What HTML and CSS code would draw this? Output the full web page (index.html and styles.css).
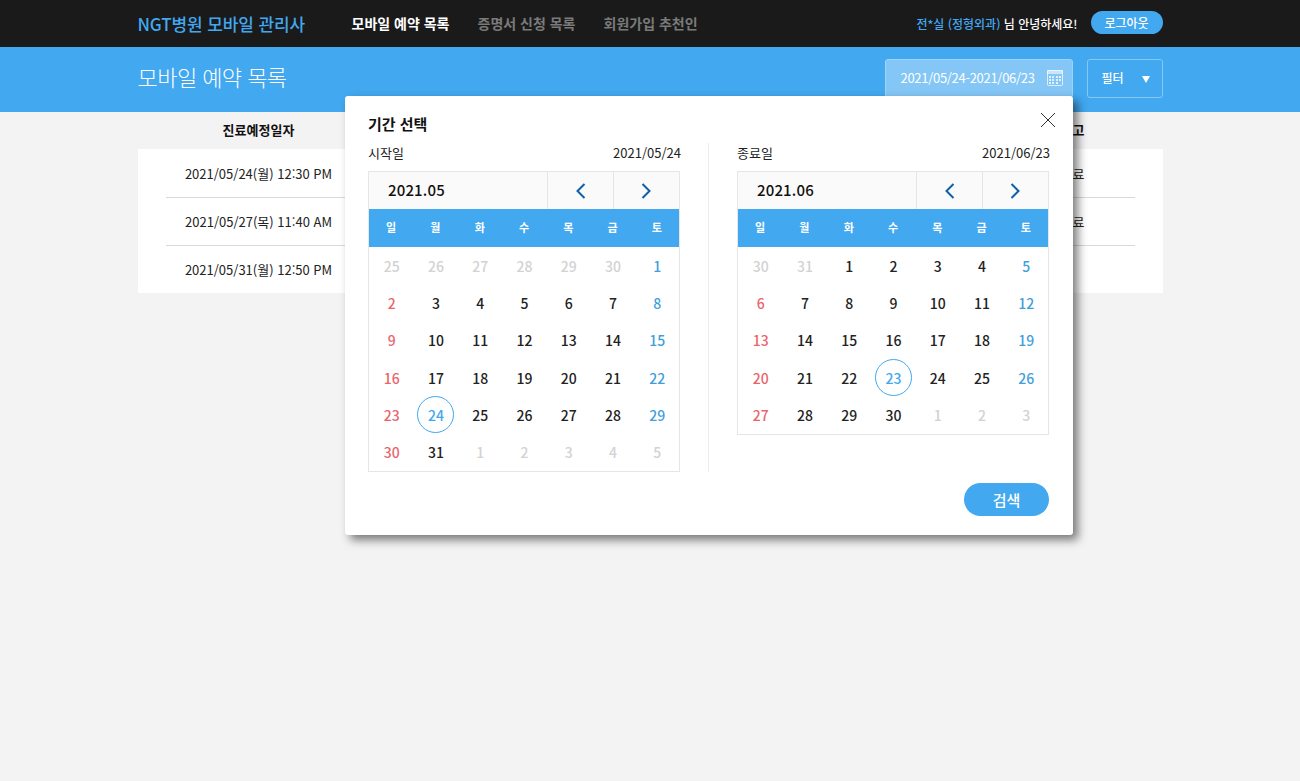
FILE: index.html
```html
<!DOCTYPE html>
<html lang="ko">
<head>
<meta charset="utf-8">
<title>모바일 예약 목록</title>
<link rel="stylesheet" href="styles.css">
</head>
<body>
<header class="topbar">
  <div class="inner topbar-inner">
    <a class="brand">NGT병원 모바일 관리사</a>
    <nav class="nav">
      <a class="nav-item active">모바일 예약 목록</a>
      <a class="nav-item">증명서 신청 목록</a>
      <a class="nav-item">회원가입 추천인</a>
    </nav>
    <div class="user">
      <span class="user-name"><span class="user-accent">전*실 (정형외과)</span> 님 안녕하세요!</span>
      <button class="logout">로그아웃</button>
    </div>
  </div>
</header>
<section class="band">
  <div class="inner band-inner">
    <h1 class="page-title">모바일 예약 목록</h1>
    <div class="date-field">
      <span>2021/05/24-2021/06/23</span>
      <svg class="cal-icon" width="16" height="16" viewBox="0 0 16 16"><rect x="0.5" y="0.5" width="15" height="15" rx="1" fill="none" stroke="#fff" opacity=".7"/><rect x="0" y="0" width="16" height="4" fill="#fff" opacity=".55"/><g fill="#fff" opacity=".75"><rect x="2" y="6" width="2" height="2"/><rect x="5" y="6" width="2" height="2"/><rect x="9" y="6" width="2" height="2"/><rect x="12" y="6" width="2" height="2"/><rect x="2" y="9" width="2" height="2"/><rect x="5" y="9" width="2" height="2"/><rect x="9" y="9" width="2" height="2"/><rect x="12" y="9" width="2" height="2"/><rect x="2" y="12" width="2" height="2"/><rect x="5" y="12" width="2" height="2"/><rect x="9" y="12" width="2" height="2"/></g></svg>
    </div>
    <button class="filter"><span>필터</span><span class="filter-arrow"></span></button>
  </div>
</section>
<main class="inner">
  <div class="list-head">
    <div class="col-date">진료예정일자</div>
    <div class="col-note">비고</div>
  </div>
  <div class="list">
    <div class="list-row"><div class="col-date">2021/05/24(월) 12:30 PM</div><div class="col-note">완료</div></div>
    <div class="list-row"><div class="col-date">2021/05/27(목) 11:40 AM</div><div class="col-note">완료</div></div>
    <div class="list-row"><div class="col-date">2021/05/31(월) 12:50 PM</div><div class="col-note"></div></div>
  </div>
</main>

<div class="modal">
  <h2 class="modal-title">기간 선택</h2>
  <button class="modal-close" aria-label="닫기"><svg width="16" height="16" viewBox="0 0 16 16"><path d="M1 1 15 15M15 1 1 15" stroke="#333" stroke-width="1" fill="none"/></svg></button>
  <div class="panes">
    <section class="pane">
      <div class="pane-label"><span>시작일</span><span>2021/05/24</span></div>
      <div class="calendar">
        <div class="cal-head">
          <div class="cal-month">2021.05</div>
          <button class="cal-nav"><svg width="12" height="16" viewBox="0 0 12 16"><path d="M9.500 1 2.500 8 9.500 15" stroke="#0e5fa8" stroke-width="2" fill="none"/></svg></button>
          <button class="cal-nav"><svg width="12" height="16" viewBox="0 0 12 16"><path d="M2.500 1 9.500 8 2.500 15" stroke="#0e5fa8" stroke-width="2" fill="none"/></svg></button>
        </div>
        <div class="week"><span>일</span><span>월</span><span>화</span><span>수</span><span>목</span><span>금</span><span>토</span></div>
        <div class="days">
          <span class="off">25</span><span class="off">26</span><span class="off">27</span><span class="off">28</span><span class="off">29</span><span class="off">30</span><span class="sat">1</span>
          <span class="sun">2</span><span>3</span><span>4</span><span>5</span><span>6</span><span>7</span><span class="sat">8</span>
          <span class="sun">9</span><span>10</span><span>11</span><span>12</span><span>13</span><span>14</span><span class="sat">15</span>
          <span class="sun">16</span><span>17</span><span>18</span><span>19</span><span>20</span><span>21</span><span class="sat">22</span>
          <span class="sun">23</span><span class="picked">24</span><span>25</span><span>26</span><span>27</span><span>28</span><span class="sat">29</span>
          <span class="sun">30</span><span>31</span><span class="off">1</span><span class="off">2</span><span class="off">3</span><span class="off">4</span><span class="off">5</span>
        </div>
      </div>
    </section>
    <div class="divider"></div>
    <section class="pane">
      <div class="pane-label"><span>종료일</span><span>2021/06/23</span></div>
      <div class="calendar">
        <div class="cal-head">
          <div class="cal-month">2021.06</div>
          <button class="cal-nav"><svg width="12" height="16" viewBox="0 0 12 16"><path d="M9.500 1 2.500 8 9.500 15" stroke="#0e5fa8" stroke-width="2" fill="none"/></svg></button>
          <button class="cal-nav"><svg width="12" height="16" viewBox="0 0 12 16"><path d="M2.500 1 9.500 8 2.500 15" stroke="#0e5fa8" stroke-width="2" fill="none"/></svg></button>
        </div>
        <div class="week"><span>일</span><span>월</span><span>화</span><span>수</span><span>목</span><span>금</span><span>토</span></div>
        <div class="days">
          <span class="off">30</span><span class="off">31</span><span>1</span><span>2</span><span>3</span><span>4</span><span class="sat">5</span>
          <span class="sun">6</span><span>7</span><span>8</span><span>9</span><span>10</span><span>11</span><span class="sat">12</span>
          <span class="sun">13</span><span>14</span><span>15</span><span>16</span><span>17</span><span>18</span><span class="sat">19</span>
          <span class="sun">20</span><span>21</span><span>22</span><span class="picked">23</span><span>24</span><span>25</span><span class="sat">26</span>
          <span class="sun">27</span><span>28</span><span>29</span><span>30</span><span class="off">1</span><span class="off">2</span><span class="off">3</span>
        </div>
      </div>
    </section>
  </div>
  <div class="modal-foot"><button class="search">검색</button></div>
</div>
</body>
</html>
```

FILE: styles.css
```css
*, *::before, *::after { box-sizing: border-box; }
html, body { margin: 0; padding: 0; }
body {
  position: relative;
  height: 781px;
  overflow: hidden;
  background: #f3f3f3;
  color: #111;
  font-family: "Noto Sans CJK KR", "Noto Sans", sans-serif;
  font-size: 14px;
}
button { font-family: inherit; border: 0; padding: 0; cursor: pointer; }
h1, h2 { margin: 0; font-weight: 400; }

.inner { width: 1025px; margin: 0 auto; }

.topbar { height: 47px; background: #1a1a1a; }
.topbar-inner { display: flex; align-items: center; height: 46px; }
.brand { width: 214px; font-size: 17px; font-weight: 500; letter-spacing: -0.12px; color: #42a8f0; white-space: nowrap; }
.nav { display: flex; gap: 28px; }
.nav-item { font-size: 14px; font-weight: 700; color: #7a7a7a; white-space: nowrap; }
.nav-item.active { color: #fff; }
.user { margin-left: auto; display: flex; align-items: center; gap: 13px; }
.user-name { font-size: 12px; font-weight: 500; color: #fff; white-space: nowrap; }
.user-accent { color: #42a8f0; }
.logout {
  width: 72px; height: 23px; margin-bottom: 1px; border-radius: 12px;
  background: #42a8f0; color: #fff; font-size: 12px; font-weight: 500;
}

.band { height: 65px; background: #42a8f0; }
.band-inner { display: flex; align-items: center; height: 65px; padding-bottom: 2px; }
.page-title { font-size: 22px; font-weight: 300; letter-spacing: -0.55px; color: #fff; margin-right: auto; margin-bottom: 6px; }
.date-field {
  display: flex; align-items: center; justify-content: space-between;
  width: 188px; height: 39px; padding: 0 9px 2px 15px; margin-right: 14px;
  background: #84c6f5; border: 1px solid #9ed2f7; border-radius: 3px;
  color: #fff; font-size: 13px; letter-spacing: -0.3px; white-space: nowrap;
}
.cal-icon { flex: none; }
.filter {
  display: flex; align-items: center; justify-content: space-between;
  width: 76px; height: 39px; padding: 0 12px 2px 14px;
  background: #42a8f0; border: 1px solid #86c7f5; border-radius: 3px;
  color: #fff; font-size: 12px; font-weight: 500;
}
.filter-arrow {
  width: 0; height: 0; margin-top: 3px;
  border-left: 4px solid transparent; border-right: 4px solid transparent;
  border-top: 7px solid #fff;
}

.list-head { display: flex; height: 37px; padding: 0 28px 2px; align-items: center; font-size: 13px; font-weight: 700; }
.list { background: #fff; padding: 0 28px; }
.list-row {
  display: flex; align-items: center; height: 48px; font-size: 13px; color: #222;
  border-top: 1px solid #d9d9d9;
}
.list-row:first-child { border-top: 0; }
.col-date { width: 186px; text-align: center; white-space: nowrap; }
.col-note { width: 56px; margin-left: auto; margin-right: 34px; text-align: center; white-space: nowrap; }

.modal {
  position: absolute; left: 345px; top: 96px;
  width: 728px; height: 439px; padding: 18px 24px 0 23px;
  background: #fff; border-radius: 3px;
  box-shadow: 5px 5px 10px rgba(0, 0, 0, .5);
}
.modal-title { font-size: 15px; font-weight: 700; line-height: 20px; color: #111; }
.modal-close {
  position: absolute; right: 17px; top: 16px; width: 16px; height: 16px;
  background: none; line-height: 0;
}
.panes { display: flex; margin-top: 9px; }
.pane { width: 312px; }
.divider { width: 1px; margin: 0 28px; background: #ececec; }
.pane-label {
  display: flex; justify-content: space-between; height: 28px; margin-right: -1px;
  font-size: 13px; line-height: 20px; color: #222;
}
.calendar { width: 312px; border: 1px solid #e6e6e6; }
.cal-head { display: flex; height: 37px; background: #fafafa; }
.cal-month {
  flex: 1; padding-left: 19px; font-size: 15px; font-weight: 500; letter-spacing: 0.15px; line-height: 36px; color: #111;
}
.cal-nav {
  width: 66px; background: none; border-left: 1px solid #e6e6e6;
  display: flex; align-items: center; justify-content: center;
}
.cal-nav + .cal-nav { padding-right: 1px; }
.week {
  display: grid; grid-template-columns: repeat(7, 1fr);
  height: 38px; background: #42a8f0;
  color: #fff; font-size: 11px; font-weight: 700; text-align: center; line-height: 37px;
}
.days {
  display: grid; grid-template-columns: repeat(7, 1fr); grid-auto-rows: 37.33px;
  margin: 0 -0.5px 0 0.5px;
  color: #222; font-size: 14px; font-weight: 500; text-align: center;
}
.days span { display: flex; align-items: center; justify-content: center; }
.days .off { color: #d2d2d2; }
.days .sun { color: #e9656c; }
.days .sat { color: #3f9fdc; }
.days .picked { color: #42a8f0; position: relative; }
.days .picked::after {
  content: ""; position: absolute; left: 50%; top: 50%;
  width: 37px; height: 37px; margin: -18.500px 0 0 -18.500px;
  border: 1px solid #42a8f0; border-radius: 50%;
}

.modal-foot { display: flex; justify-content: flex-end; margin-top: 11px; }
.search {
  width: 85px; height: 33px; border-radius: 17px;
  background: #42a8f0; color: #fff; font-size: 15px; font-weight: 500;
}
```
